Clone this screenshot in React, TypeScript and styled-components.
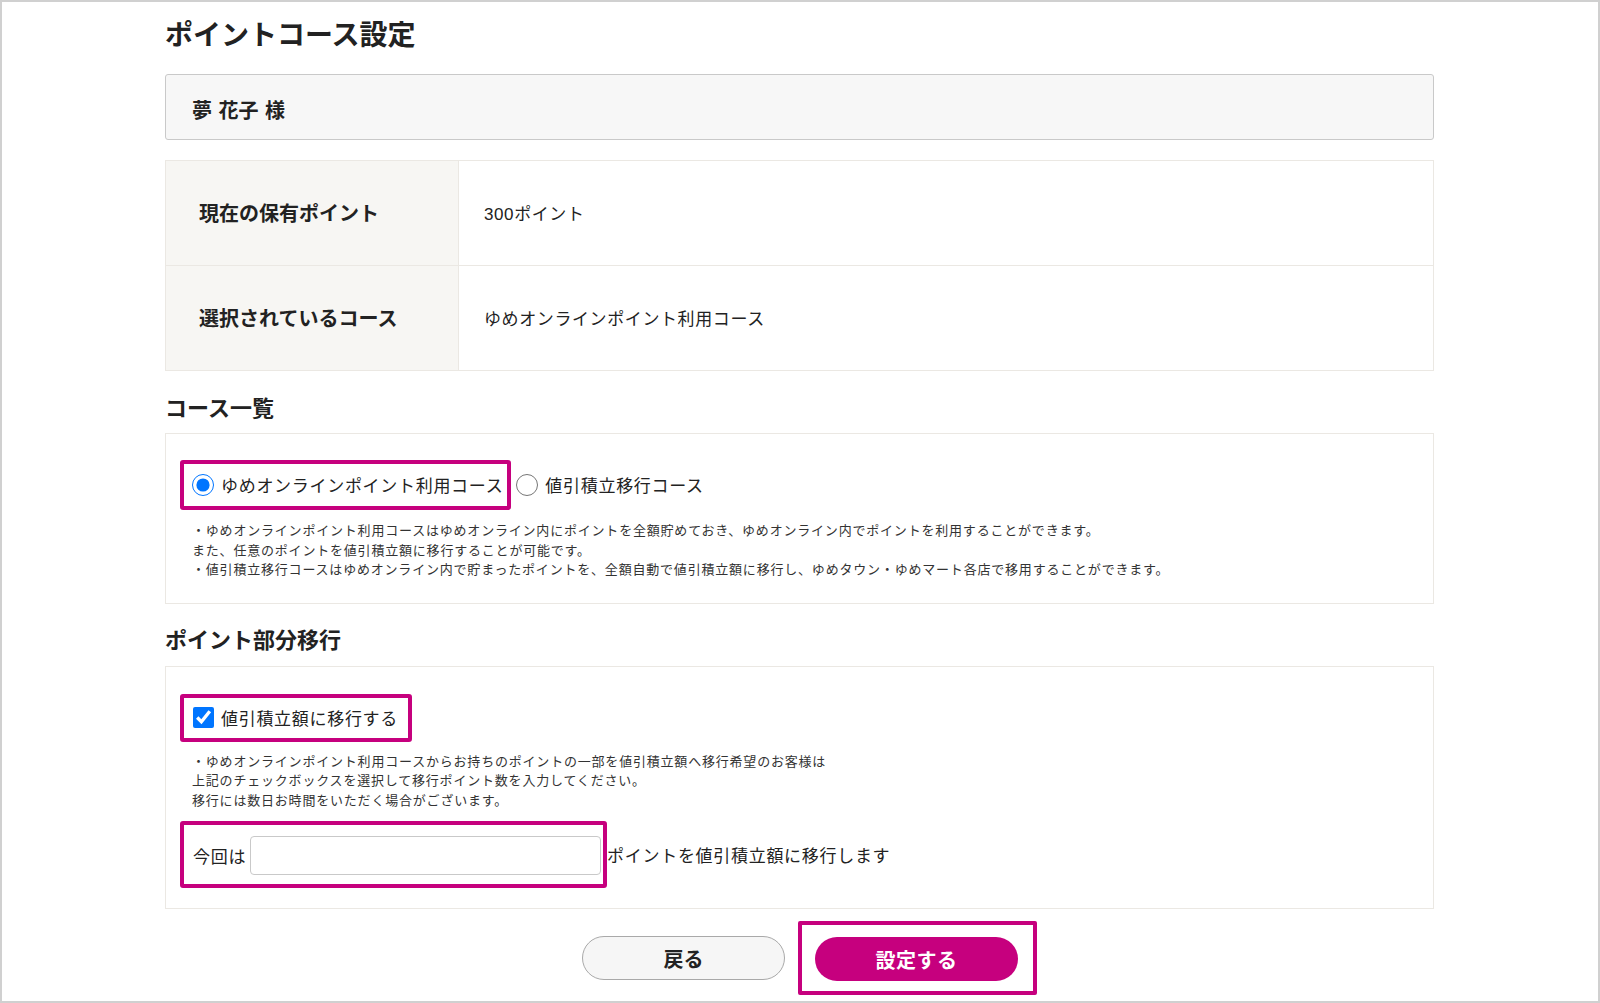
import React from "react";
import styled, { createGlobalStyle } from "styled-components";

const MAGENTA = "#c6007e";

const GlobalStyle = createGlobalStyle`
  html, body {
    margin: 0;
    padding: 0;
    background: #ffffff;
  }
  body {
    font-family: "Noto Sans CJK JP", "Liberation Sans", sans-serif;
    color: #222;
  }
  * { box-sizing: border-box; }
`;

const Frame = styled.div`
  width: 1600px;
  height: 1003px;
  border: 2px solid #d0d0d0;
  overflow: hidden;
  background: #fff;
`;

const Content = styled.div`
  margin-left: 163px;
  width: 1269px;
`;

const Title = styled.h1`
  margin: 12px 0 0;
  font-size: 28px;
  line-height: 39px;
  font-weight: 700;
  color: #222;
`;

const NameBox = styled.div`
  margin-top: 21px;
  height: 66px;
  padding: 4px 26px 0;
  display: flex;
  align-items: center;
  background: #f7f7f7;
  border: 1px solid #c9c9c9;
  border-radius: 3px;
  font-size: 20px;
  font-weight: 700;
  color: #222;
  word-spacing: 2px;
`;

const InfoTable = styled.table`
  margin-top: 20px;
  width: 100%;
  border-collapse: collapse;
`;

const LabelCell = styled.th`
  width: 293px;
  height: 105px;
  padding: 0 0 2px 33px;
  text-align: left;
  background: #f7f6f3;
  border: 1px solid #ebe8e3;
  font-size: 20px;
  font-weight: 700;
  color: #222;
`;

const ValueCell = styled.td`
  height: 105px;
  padding: 0 0 2px 25px;
  border: 1px solid #ebe8e3;
  font-family: "Liberation Sans", "Noto Sans CJK JP", sans-serif;
  font-size: 17px;
  letter-spacing: 0.6px;
  color: #222;
`;

const SectionHeading = styled.h2<{ $top: number; $bottom: number }>`
  margin: ${(p) => p.$top}px 0 ${(p) => p.$bottom}px;
  font-size: 22px;
  line-height: 32px;
  font-weight: 700;
  color: #222;
`;

const Panel = styled.div<{ $pad: string }>`
  border: 1px solid #ebe8e3;
  padding: ${(p) => p.$pad};
`;

const OptionRow = styled.div`
  display: flex;
  align-items: center;
`;

const Highlight = styled.label<{ $h: number; $pr: number }>`
  display: inline-flex;
  align-items: center;
  height: ${(p) => p.$h}px;
  padding: 0 ${(p) => p.$pr}px 0 8px;
  border: 4px solid ${MAGENTA};
  border-radius: 3px;
`;

const PlainOption = styled.label`
  display: inline-flex;
  align-items: center;
  margin-left: 5px;
`;

const Radio = styled.input.attrs({ type: "radio" })`
  width: 22px;
  height: 22px;
  margin: 0 7px 0 0;
  accent-color: #0075ff;
`;

const Check = styled.input.attrs({ type: "checkbox" })`
  width: 21px;
  height: 21px;
  margin: 0 7px 0 1px;
  accent-color: #0075ff;
`;

const OptionText = styled.span`
  font-size: 17px;
  letter-spacing: 0.7px;
  color: #222;
  line-height: 24px;
`;

const Notes = styled.p<{ $top: number }>`
  margin: ${(p) => p.$top}px 0 0 12px;
  font-size: 13px;
  letter-spacing: 0.8px;
  line-height: 19.5px;
  color: #333;
`;

const AmountRow = styled.div`
  margin-top: 12px;
  display: flex;
  align-items: center;
`;

const AmountBox = styled.div`
  display: inline-flex;
  align-items: center;
  height: 67px;
  padding: 2px 2px 0 9px;
  border: 4px solid ${MAGENTA};
  border-radius: 3px;
`;

const AmountInput = styled.input.attrs({ type: "text" })`
  width: 351px;
  height: 39px;
  margin-left: 4px;
  border: 1px solid #c9c9c9;
  border-radius: 4px;
  background: #fff;
  font-size: 16px;
  padding: 0 8px;
  outline: none;
`;

const ButtonRow = styled.div`
  margin-top: 12px;
  padding-left: 20px;
  display: flex;
  justify-content: center;
  align-items: center;
  gap: 13px;
`;

const BackButton = styled.button`
  width: 203px;
  height: 44px;
  border-radius: 22px;
  border: 1px solid #a9a9a9;
  background: #f6f6f6;
  font-family: "Noto Sans CJK JP", sans-serif;
  font-size: 20px;
  font-weight: 700;
  color: #222;
  cursor: pointer;
`;

const SubmitFrame = styled.div`
  border: 4px solid ${MAGENTA};
  border-radius: 2px;
  padding: 12px 15px 10px 13px;
`;

const SubmitButton = styled.button`
  display: block;
  width: 203px;
  height: 44px;
  border-radius: 22px;
  border: none;
  background: ${MAGENTA};
  font-family: "Noto Sans CJK JP", sans-serif;
  font-size: 20px;
  font-weight: 700;
  letter-spacing: 0.5px;
  color: #fff;
  cursor: pointer;
`;

export default function App() {
  return (
    <>
      <GlobalStyle />
      <Frame>
        <Content>
          <Title>ポイントコース設定</Title>
          <NameBox>夢 花子 様</NameBox>

          <InfoTable>
            <tbody>
              <tr>
                <LabelCell>現在の保有ポイント</LabelCell>
                <ValueCell>300ポイント</ValueCell>
              </tr>
              <tr>
                <LabelCell>選択されているコース</LabelCell>
                <ValueCell>ゆめオンラインポイント利用コース</ValueCell>
              </tr>
            </tbody>
          </InfoTable>

          <SectionHeading $top={19} $bottom={11}>コース一覧</SectionHeading>
          <Panel $pad="26px 14px 24px">
            <OptionRow>
              <Highlight $h={50} $pr={4}>
                <Radio name="course" defaultChecked />
                <OptionText>ゆめオンラインポイント利用コース</OptionText>
              </Highlight>
              <PlainOption>
                <Radio name="course" />
                <OptionText>値引積立移行コース</OptionText>
              </PlainOption>
            </OptionRow>
            <Notes $top={10}>
              ・ゆめオンラインポイント利用コースはゆめオンライン内にポイントを全額貯めておき、ゆめオンライン内でポイントを利用することができます。
              <br />
              また、任意のポイントを値引積立額に移行することが可能です。
              <br />
              ・値引積立移行コースはゆめオンライン内で貯まったポイントを、全額自動で値引積立額に移行し、ゆめタウン・ゆめマート各店で移用することができます。
            </Notes>
          </Panel>

          <SectionHeading $top={18} $bottom={12}>ポイント部分移行</SectionHeading>
          <Panel $pad="27px 14px 20px">
            <OptionRow>
              <Highlight $h={48} $pr={10}>
                <Check defaultChecked />
                <OptionText>値引積立額に移行する</OptionText>
              </Highlight>
            </OptionRow>
            <Notes $top={9}>
              ・ゆめオンラインポイント利用コースからお持ちのポイントの一部を値引積立額へ移行希望のお客様は
              <br />
              上記のチェックボックスを選択して移行ポイント数を入力してください。
              <br />
              移行には数日お時間をいただく場合がございます。
            </Notes>
            <AmountRow>
              <AmountBox>
                <OptionText>今回は</OptionText>
                <AmountInput />
              </AmountBox>
              <OptionText>ポイントを値引積立額に移行します</OptionText>
            </AmountRow>
          </Panel>

          <ButtonRow>
            <BackButton>戻る</BackButton>
            <SubmitFrame>
              <SubmitButton>設定する</SubmitButton>
            </SubmitFrame>
          </ButtonRow>
        </Content>
      </Frame>
    </>
  );
}
